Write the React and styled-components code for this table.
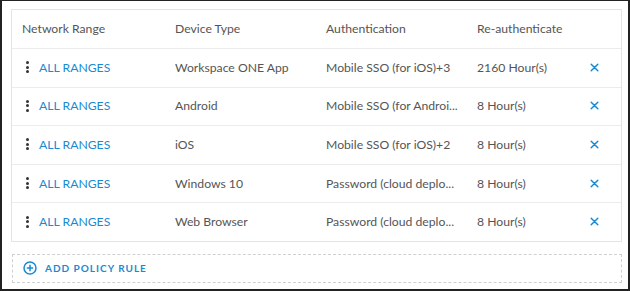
import styled, { createGlobalStyle } from 'styled-components';

const GlobalStyle = createGlobalStyle`
  body {
    margin: 0;
    background: #ffffff;
    font-family: Lato, "Liberation Sans", sans-serif;
  }
`;

const Frame = styled.div`
  box-sizing: border-box;
  width: 630px;
  height: 291px;
  border-style: solid;
  border-color: #222222;
  border-width: 1px 2px 2px 2px;
  padding: 8px 6px 0 9px;
  background: #ffffff;
`;

const Table = styled.div`
  border: 1px solid #e4e4e4;
  width: 611px;
  box-sizing: border-box;
`;

const Row = styled.div`
  display: grid;
  grid-template-columns: 153px 151px 151px 1fr 40px;
  height: ${props => (props.$header ? '38px' : '38.6px')};
  align-items: center;
  border-top: ${props => (props.$header ? 'none' : '1px solid #ececec')};
  box-sizing: border-box;
  font-size: 12.2px;
  color: #555555;
  padding-bottom: 1px;
`;

const Cell = styled.div`
  padding-left: 10px;
  padding-right: 4px;
  white-space: nowrap;
  overflow: hidden;
`;

const RangeCell = styled.div`
  padding-left: 14px;
  display: flex;
  align-items: center;
  gap: 10px;
`;

const Link = styled.span`
  color: #1a8ad0;
`;

const Kebab = styled.span`
  display: inline-flex;
  flex-direction: column;
  gap: 1.5px;
  width: 3px;

  i {
    display: block;
    width: 3px;
    height: 3px;
    border-radius: 50%;
    background: #333333;
  }
`;

const Remove = styled.div`
  padding-left: 9px;
  display: flex;
  align-items: center;
`;

const AddBox = styled.div`
  margin-top: 12px;
  margin-left: 1px;
  width: 610px;
  height: 29px;
  box-sizing: border-box;
  border: 1px dashed #d0d0d0;
  display: flex;
  align-items: center;
  padding-left: 10px;
  gap: 8px;
  color: #1a8ad0;
  font-size: 10px;
  font-weight: 700;
  letter-spacing: 1px;
`;

// auth labels are shown already cut, as the column shows them
const rows = [
  ['Workspace ONE App', 'Mobile SSO (for iOS)+3', '2160 Hour(s)'],
  ['Android', 'Mobile SSO (for Androi...', '8 Hour(s)'],
  ['iOS', 'Mobile SSO (for iOS)+2', '8 Hour(s)'],
  ['Windows 10', 'Password (cloud deplo...', '8 Hour(s)'],
  ['Web Browser', 'Password (cloud deplo...', '8 Hour(s)'],
];

function CloseIcon() {
  return (
    <svg width="9" height="9" viewBox="0 0 9 9">
      <path d="M1.2 1.2 L7.8 7.8 M7.8 1.2 L1.2 7.8" stroke="#1a8ad0" strokeWidth="1.5" strokeLinecap="round" />
    </svg>
  );
}

function PlusCircle() {
  return (
    <svg width="14" height="14" viewBox="0 0 14 14">
      <circle cx="7" cy="7" r="6" fill="none" stroke="#1a8ad0" strokeWidth="1.5" />
      <path d="M7 3.8 V10.2 M3.8 7 H10.2" stroke="#1a8ad0" strokeWidth="1.5" />
    </svg>
  );
}

export default function App() {
  return (
    <Frame>
      <GlobalStyle />
      <Table>
        <Row $header>
          <Cell>Network Range</Cell>
          <Cell>Device Type</Cell>
          <Cell>Authentication</Cell>
          <Cell>Re-authenticate</Cell>
          <Cell />
        </Row>
        {rows.map((r, i) => (
          <Row key={i}>
            <RangeCell>
              <Kebab><i /><i /><i /></Kebab>
              <Link>ALL RANGES</Link>
            </RangeCell>
            <Cell>{r[0]}</Cell>
            <Cell>{r[1]}</Cell>
            <Cell>{r[2]}</Cell>
            <Remove><CloseIcon /></Remove>
          </Row>
        ))}
      </Table>
      <AddBox>
        <PlusCircle />
        ADD POLICY RULE
      </AddBox>
    </Frame>
  );
}
